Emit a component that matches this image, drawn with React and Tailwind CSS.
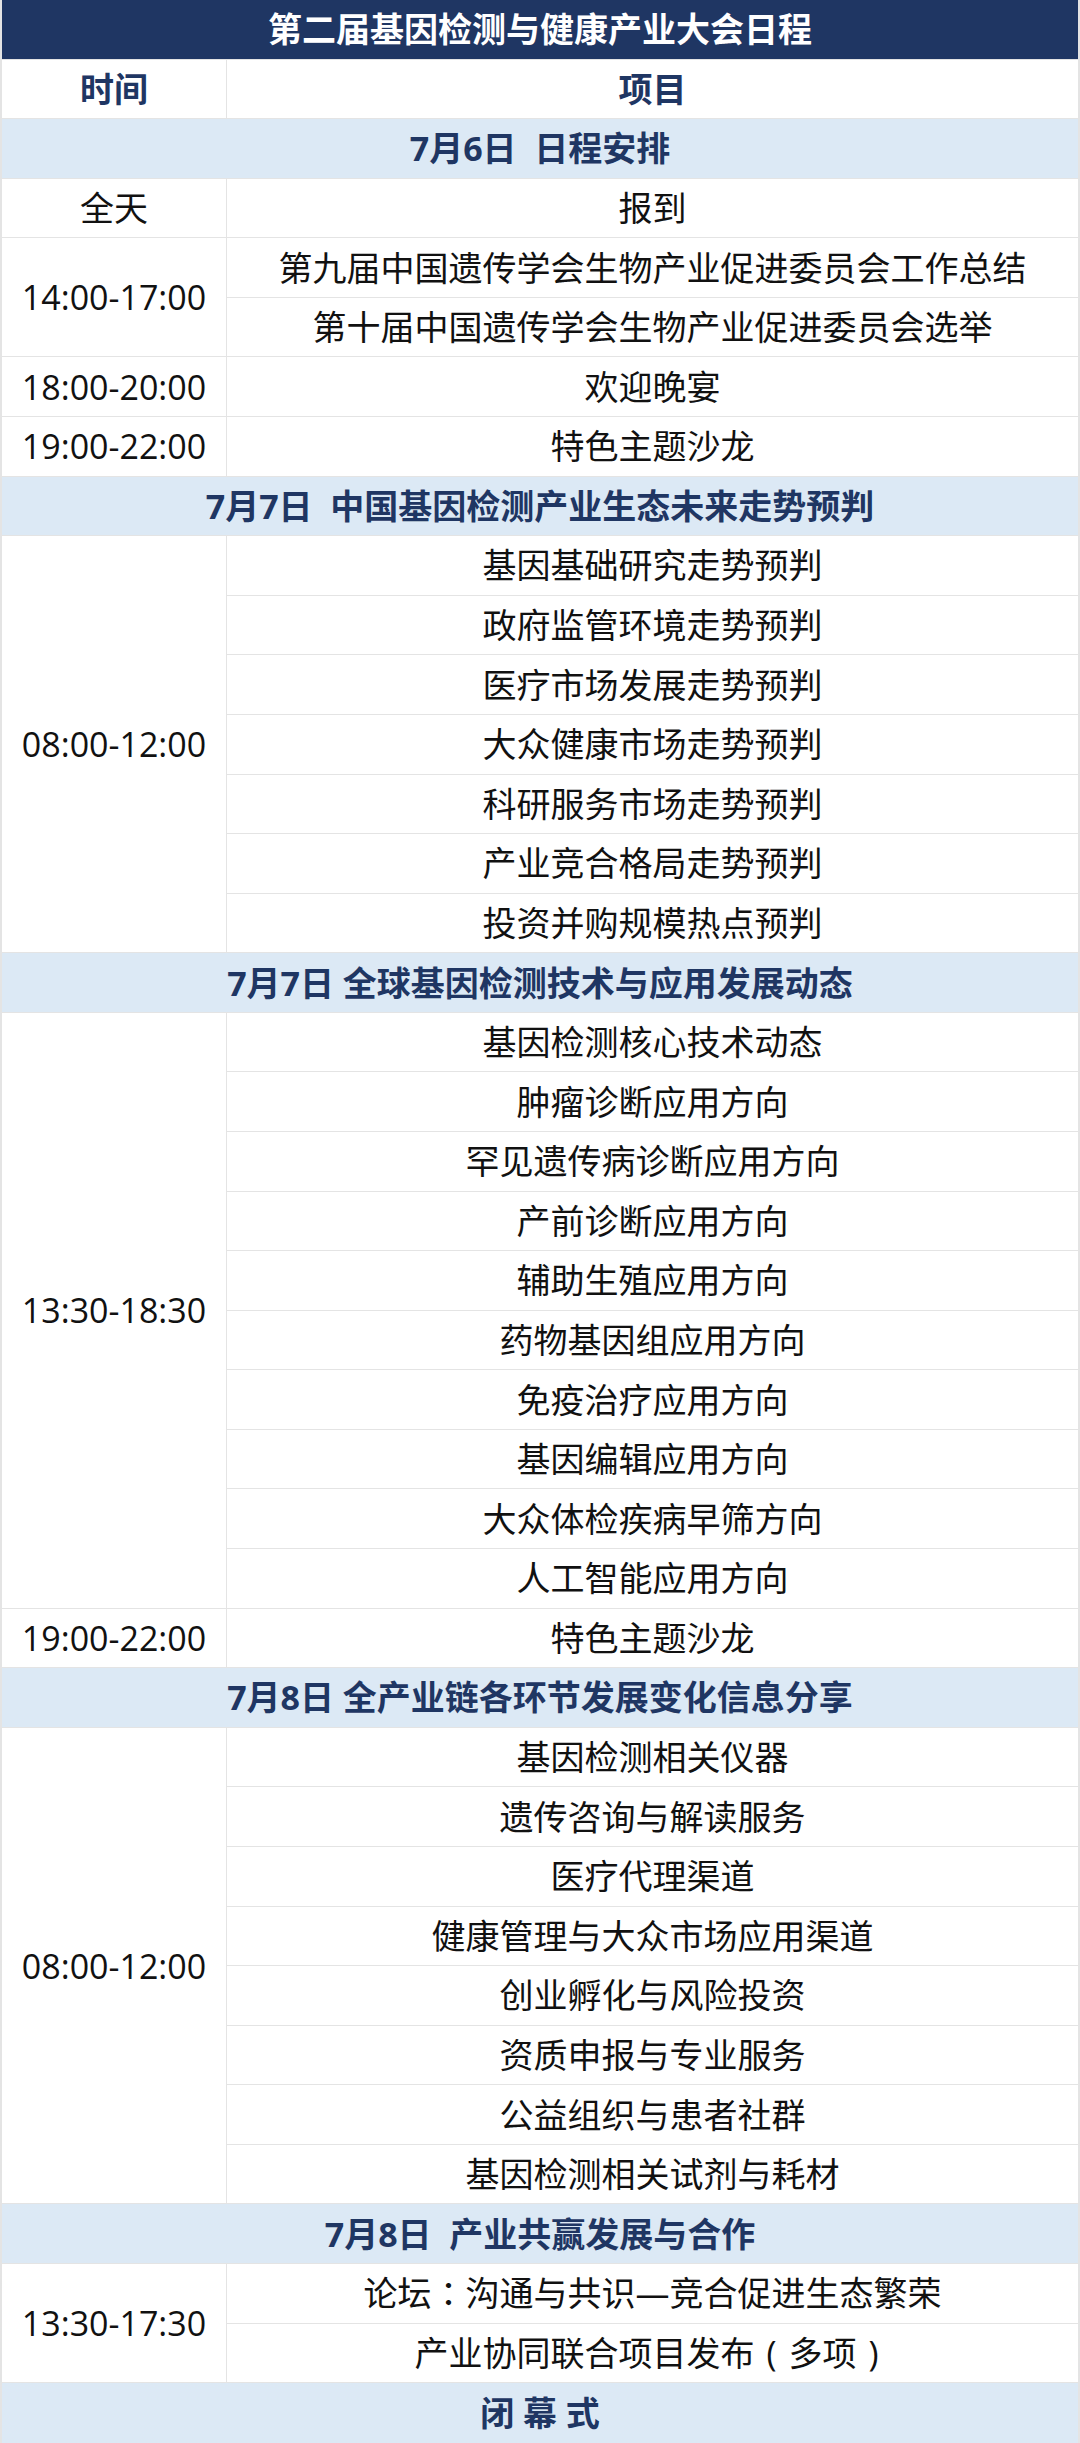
const tc = { fontFamily: '"Noto Sans CJK TC", sans-serif' };

const sections = [
  {
    title: "7月6日  日程安排",
    blocks: [
      { time: "全天", items: ["报到"] },
      {
        time: "14:00-17:00",
        span: "row-span-2",
        items: ["第九届中国遗传学会生物产业促进委员会工作总结", "第十届中国遗传学会生物产业促进委员会选举"],
      },
      { time: "18:00-20:00", items: ["欢迎晚宴"] },
      { time: "19:00-22:00", items: ["特色主题沙龙"] },
    ],
  },
  {
    title: "7月7日  中国基因检测产业生态未来走势预判",
    blocks: [
      {
        time: "08:00-12:00",
        span: "row-span-7",
        items: [
          "基因基础研究走势预判",
          "政府监管环境走势预判",
          "医疗市场发展走势预判",
          "大众健康市场走势预判",
          "科研服务市场走势预判",
          "产业竞合格局走势预判",
          "投资并购规模热点预判",
        ],
      },
    ],
  },
  {
    title: "7月7日 全球基因检测技术与应用发展动态",
    blocks: [
      {
        time: "13:30-18:30",
        span: "row-span-10",
        items: [
          "基因检测核心技术动态",
          "肿瘤诊断应用方向",
          "罕见遗传病诊断应用方向",
          "产前诊断应用方向",
          "辅助生殖应用方向",
          "药物基因组应用方向",
          "免疫治疗应用方向",
          "基因编辑应用方向",
          "大众体检疾病早筛方向",
          "人工智能应用方向",
        ],
      },
      { time: "19:00-22:00", items: ["特色主题沙龙"] },
    ],
  },
  {
    title: "7月8日 全产业链各环节发展变化信息分享",
    blocks: [
      {
        time: "08:00-12:00",
        span: "row-span-8",
        items: [
          "基因检测相关仪器",
          "遗传咨询与解读服务",
          "医疗代理渠道",
          "健康管理与大众市场应用渠道",
          "创业孵化与风险投资",
          "资质申报与专业服务",
          "公益组织与患者社群",
          "基因检测相关试剂与耗材",
        ],
      },
    ],
  },
  {
    title: "7月8日  产业共赢发展与合作",
    blocks: [
      {
        time: "13:30-17:30",
        span: "row-span-2",
        items: [
          <>
            论坛<span style={tc}>：</span>沟通与共识—竞合促进生态繁荣
          </>,
          <>
            产业协同联合项目发布<span className="inline-block w-[34px] text-center">(</span>多项
            <span className="inline-block w-[34px] text-center">)</span>
          </>,
        ],
      },
    ],
  },
];

const cell = "flex items-center justify-center border-b border-[#e4e4e4] whitespace-pre";

export default function App() {
  return (
    <div
      className="grid w-[1080px] grid-cols-[225px_1fr] auto-rows-[59.585px] border-x-2 border-[#e4e4e4] bg-white text-[34px] leading-none text-[#111111]"
      style={{ fontFamily: '"Open Sans", "Noto Sans CJK SC", sans-serif' }}
    >
      <div className={`${cell} col-span-2 border-[#1f3663] bg-[#1f3663] font-bold text-white`}>
        第二届基因检测与健康产业大会日程
      </div>
      <div className={`${cell} border-r font-bold text-[#1f3663]`}>时间</div>
      <div className={`${cell} font-bold text-[#1f3663]`}>项目</div>

      {sections.map((s) => (
        <div key={s.title} className="contents">
          <div className={`${cell} col-span-2 border-[#d6e4f1] bg-[#dce9f5] font-bold text-[#1f3663]`}>{s.title}</div>
          {s.blocks.map((b) => (
            <div key={s.title + b.time} className="contents">
              <div className={`${cell} border-r ${b.span || ""}`}>{b.time}</div>
              {b.items.map((it, i) => (
                <div key={i} className={cell}>
                  {it}
                </div>
              ))}
            </div>
          ))}
        </div>
      ))}

      <div className={`${cell} col-span-2 border-b-0 bg-[#dce9f5] font-bold text-[#1f3663]`}>闭 幕 式</div>
    </div>
  );
}
